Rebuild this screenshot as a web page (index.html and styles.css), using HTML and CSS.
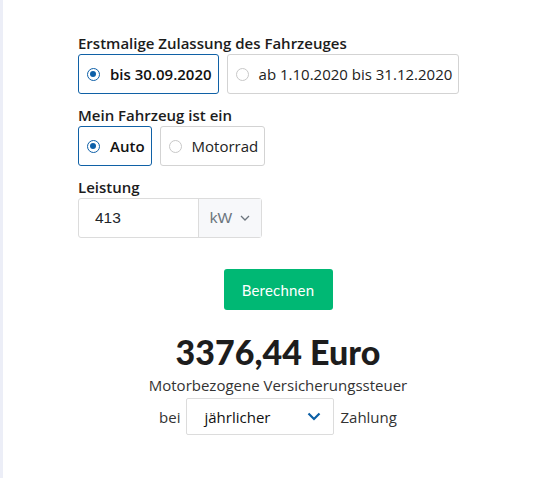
FILE: index.html
```html
<!DOCTYPE html>
<html lang="de">
<head>
    <meta charset="UTF-8">
    <meta name="viewport" content="width=device-width, initial-scale=1.0">
    <title>Kfz-Steuer Rechner</title>
    <link rel="stylesheet" href="styles.css">
</head>
<body>
    <div class="page">
        <div class="calc">
            <div class="field">
                <div class="label">Erstmalige Zulassung des Fahrzeuges</div>
                <div class="options">
                    <label class="option checked"><span class="radio"></span>bis 30.09.2020</label>
                    <label class="option"><span class="radio"></span>ab 1.10.2020 bis 31.12.2020</label>
                </div>
            </div>
            <div class="field">
                <div class="label">Mein Fahrzeug ist ein</div>
                <div class="options">
                    <label class="option checked"><span class="radio"></span>Auto</label>
                    <label class="option"><span class="radio"></span>Motorrad</label>
                </div>
            </div>
            <div class="field">
                <div class="label">Leistung</div>
                <div class="input-group">
                    <div class="input">413</div>
                    <div class="unit">kW
                        <svg width="10" height="6" viewBox="0 0 10 6"><path d="M1 1l4 4 4-4" fill="none" stroke="#6c757d" stroke-width="1.3"/></svg>
                    </div>
                </div>
            </div>
            <div class="result">
                <button class="btn">Berechnen</button>
                <div class="amount">3376,44 Euro</div>
                <div class="desc">Motorbezogene Versicherungssteuer</div>
                <div class="period">
                    <span>bei</span>
                    <div class="select">jährlicher
                        <svg width="14" height="9" viewBox="0 0 14 9"><path d="M1.5 1.5l5.5 5.5 5.5-5.5" fill="none" stroke="#0b5fa5" stroke-width="2.2"/></svg>
                    </div>
                    <span>Zahlung</span>
                </div>
            </div>
        </div>
    </div>
</body>
</html>
```

FILE: styles.css
```css
html, body {
    margin: 0;
    padding: 0;
    height: 100%;
    background: #fff;
    font-family: "Open Sans", "Noto Sans", sans-serif;
    color: #212529;
}
.page {
    height: 100%;
    border-left: 3px solid #eceef7;
    box-sizing: border-box;
}
.calc {
    width: 400px;
    padding: 34px 0 0 75px;
}
.field {
    margin-bottom: 12px;
}
.label {
    font-size: 15px;
    font-weight: 600;
    line-height: 19px;
    margin-bottom: 1px;
    color: #1c1c1c;
}
.options {
    display: flex;
    gap: 8px;
}
.option {
    display: flex;
    align-items: center;
    height: 38px;
    padding: 0 6px 0 8px;
    border: 1px solid #d3d3d3;
    border-radius: 3px;
    font-size: 15px;
    color: #222;
}
.option.checked {
    border-color: #1061a6;
    font-weight: 600;
    color: #111;
}
.radio {
    width: 13px;
    height: 13px;
    border: 1px solid #c8c8c8;
    border-radius: 50%;
    margin-right: 10px;
    box-sizing: border-box;
    position: relative;
}
.checked .radio {
    border: 1.5px solid #0d5fa8;
}
.checked .radio::after {
    content: "";
    position: absolute;
    left: 2px;
    top: 2px;
    width: 6px;
    height: 6px;
    border-radius: 50%;
    background: #0d5fa8;
}
.input-group {
    display: flex;
    width: 184px;
    height: 40px;
    border: 1px solid #dcdcdc;
    border-radius: 3px;
    box-sizing: border-box;
}
.input {
    width: 120px;
    padding-left: 16px;
    display: flex;
    align-items: center;
    font-size: 15.5px;
    font-family: "Liberation Sans", Arial, sans-serif;
    border-right: 1px solid #dcdcdc;
    box-sizing: border-box;
}
.unit {
    flex: 1;
    display: flex;
    align-items: center;
    justify-content: center;
    gap: 8px;
    background: #f7f8fa;
    color: #6c757d;
    font-size: 15.5px;
    font-family: "Liberation Sans", Arial, sans-serif;
}
.result {
    display: flex;
    flex-direction: column;
    align-items: center;
    padding-top: 19px;
}
.btn {
    background: #00b874;
    color: #fff;
    border: none;
    border-radius: 3px;
    width: 109px;
    height: 41px;
    font-family: Lato, sans-serif;
    font-size: 15px;
    letter-spacing: 0.2px;
}
.amount {
    font-family: Lato, sans-serif;
    font-weight: 900;
    font-size: 34px;
    color: #1d1d1d;
    margin-top: 22px;
    line-height: 40px;
}
.desc {
    font-size: 15px;
    color: #333;
    margin-top: 2px;
    line-height: 22px;
}
.period {
    display: flex;
    align-items: center;
    gap: 6px;
    font-size: 15px;
    color: #333;
    margin-top: 2px;
}
.select {
    width: 148px;
    height: 37px;
    box-sizing: border-box;
    border: 1px solid #dcdcdc;
    border-radius: 2px;
    display: flex;
    align-items: center;
    justify-content: space-between;
    padding: 0 12px 0 17px;
    color: #111;
}
```
